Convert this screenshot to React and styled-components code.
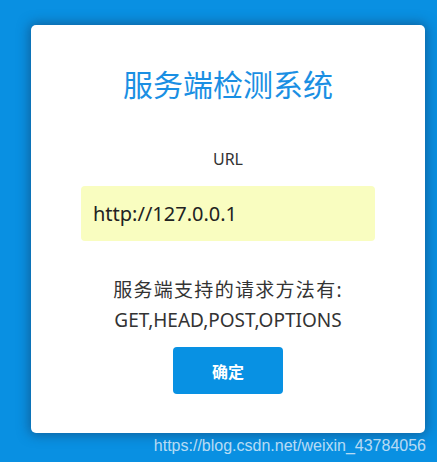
import React, { useState } from "react";
import styled, { createGlobalStyle } from "styled-components";

const GlobalStyle = createGlobalStyle`
  html, body {
    margin: 0;
    padding: 0;
    background: #0990e2;
  }
  body {
    font-family: "Noto Sans", "Noto Sans CJK SC", sans-serif;
  }
`;

const Page = styled.div`
  width: 437px;
  height: 462px;
  padding: 25px 0 0 31px;
  box-sizing: border-box;
  display: flex;
  flex-direction: column;
`;

const Card = styled.div`
  width: 394px;
  height: 408px;
  box-sizing: border-box;
  background: #fff;
  border-radius: 5px;
  box-shadow: 0 0 12px 2px rgba(20, 60, 100, 0.55);
  display: flex;
  flex-direction: column;
  align-items: center;
  padding-top: 38px;
`;

const Title = styled.h1`
  margin: 0;
  font-size: 30px;
  line-height: 40px;
  font-weight: 400;
  color: #1a8fe3;
  font-family: "Noto Sans CJK SC", sans-serif;
`;

const Label = styled.div`
  margin-top: 45px;
  font-size: 16px;
  line-height: 22px;
  color: #333;
`;

const UrlInput = styled.input`
  margin-top: 16px;
  width: 294px;
  height: 55px;
  box-sizing: border-box;
  border: none;
  outline: none;
  border-radius: 4px;
  background: #f9fdc0;
  padding: 0 12px;
  font-family: "Noto Sans", sans-serif;
  font-size: 20px;
  color: #222;
`;

const Methods = styled.div`
  margin-top: 34px;
  display: flex;
  flex-direction: column;
  align-items: center;
  color: #333;
`;

const MethodLine = styled.div`
  font-size: 19px;
  line-height: 30px;
  letter-spacing: ${({ $cjk }) => ($cjk ? "1.3px" : "0")};
  font-family: "Noto Sans", "Noto Sans CJK SC", sans-serif;
`;

const Button = styled.button`
  margin-top: 12px;
  width: 110px;
  height: 47px;
  border: none;
  border-radius: 4px;
  background: #0891e3;
  color: #fff;
  font-family: "Noto Sans CJK SC", sans-serif;
  font-weight: 700;
  font-size: 16px;
  cursor: pointer;
`;

const Watermark = styled.div`
  align-self: flex-end;
  margin-right: 11px;
  margin-top: 4px;
  font-family: "Liberation Sans", Arial, sans-serif;
  font-size: 16px;
  color: rgba(230, 240, 250, 0.8);
`;

export default function App() {
  const [url, setUrl] = useState("http://127.0.0.1");
  return (
    <>
      <GlobalStyle />
      <Page>
        <Card>
          <Title>服务端检测系统</Title>
          <Label>URL</Label>
          <UrlInput value={url} onChange={(e) => setUrl(e.target.value)} />
          <Methods>
            <MethodLine $cjk>服务端支持的请求方法有:</MethodLine>
            <MethodLine>GET,HEAD,POST,OPTIONS</MethodLine>
          </Methods>
          <Button>确定</Button>
        </Card>
        <Watermark>https://blog.csdn.net/weixin_43784056</Watermark>
      </Page>
    </>
  );
}
